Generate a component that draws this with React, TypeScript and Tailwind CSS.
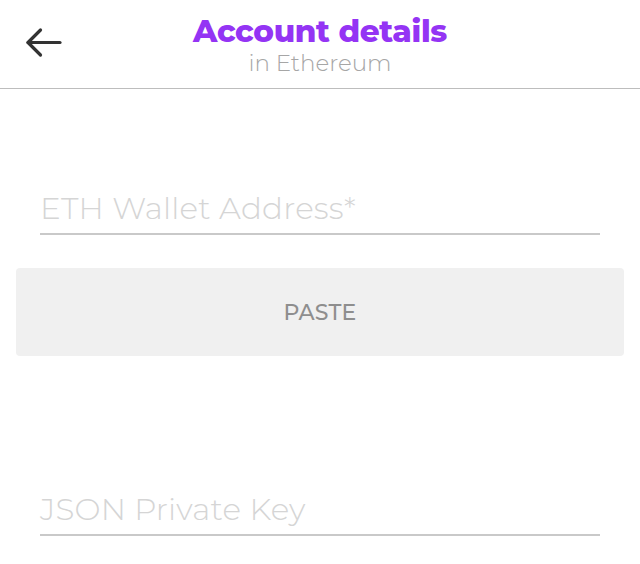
import React from 'react';

const font = { fontFamily: 'Montserrat, "Open Sans", "Liberation Sans", sans-serif' };

const UnderlineField: React.FC<{ label: string }> = ({ label }) => (
    <div className="px-10">
        <div className="text-[31px] font-light leading-[36px] text-[#d5d5d5] tracking-[0.2px]">{label}</div>
        <div className="mt-[7px] h-[2px] bg-[#c9c9c9]" />
    </div>
);

export default function App() {
    return (
        <div className="w-[640px] h-[564px] bg-white overflow-hidden" style={font}>
            {/* Header */}
            <header className="relative h-[89px] border-b border-[#bdbdbd] flex flex-col items-center pt-[12px]">
                <button className="absolute left-[25px] top-[27px] p-0 text-[#333]">
                    <svg width="38" height="31" viewBox="0 0 38 31" fill="none" stroke="currentColor" strokeWidth="3.2" strokeLinecap="round" strokeLinejoin="round">
                        <path d="M3 15.5H35" />
                        <path d="M15.5 3L3 15.5L15.5 28" />
                    </svg>
                </button>
                <h1 className="text-[31px] leading-[38px] font-extrabold text-[#9434f4] tracking-[-0.3px]">Account details</h1>
                <p className="text-[23px] leading-[26px] text-[#a6a6a6] font-light">in Ethereum</p>
            </header>

            <div className="pt-[101px]">
                <UnderlineField label="ETH Wallet Address*" />
            </div>

            <div className="px-4 mt-[33px]">
                <button className="w-full h-[88px] bg-[#f0f0f0] rounded-[4px] text-[22px] font-medium text-[#8e8e8e] tracking-[0.2px]">
                    PASTE
                </button>
            </div>

            <div className="pt-[135px]">
                <UnderlineField label="JSON Private Key" />
            </div>
        </div>
    );
}
